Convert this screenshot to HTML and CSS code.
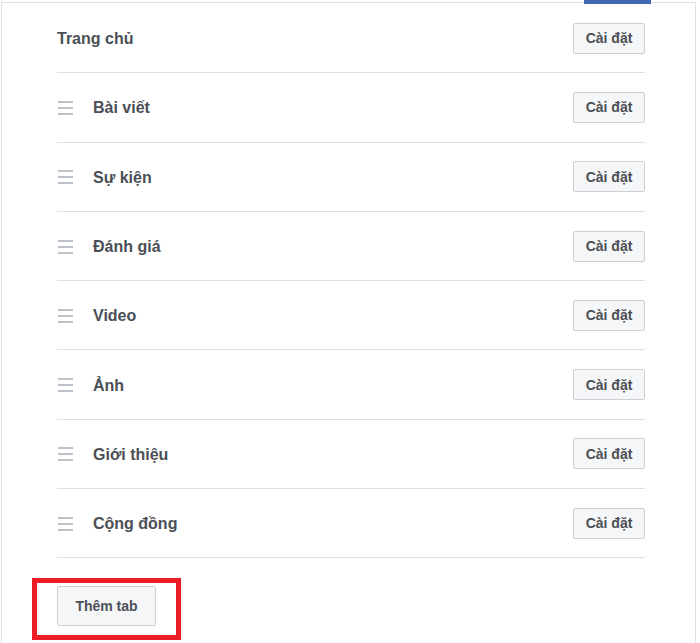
FILE: index.html
```html
<!DOCTYPE html>
<html lang="vi">

<head>
    <meta charset="UTF-8">
    <title>Tab trang</title>
    <link rel="stylesheet" href="styles.css">
</head>

<body>

    <div class="panel">
        <span class="tab-marker"></span>

        <div class="tab-list">
            <div class="tab-row">
                <span class="tab-name">Trang chủ</span>
                <button class="btn-small">Cài đặt</button>
            </div>
            <div class="tab-row">
                <span class="drag"><i></i><i></i><i></i></span>
                <span class="tab-name">Bài viết</span>
                <button class="btn-small">Cài đặt</button>
            </div>
            <div class="tab-row">
                <span class="drag"><i></i><i></i><i></i></span>
                <span class="tab-name">Sự kiện</span>
                <button class="btn-small">Cài đặt</button>
            </div>
            <div class="tab-row">
                <span class="drag"><i></i><i></i><i></i></span>
                <span class="tab-name">Đánh giá</span>
                <button class="btn-small">Cài đặt</button>
            </div>
            <div class="tab-row">
                <span class="drag"><i></i><i></i><i></i></span>
                <span class="tab-name">Video</span>
                <button class="btn-small">Cài đặt</button>
            </div>
            <div class="tab-row">
                <span class="drag"><i></i><i></i><i></i></span>
                <span class="tab-name">Ảnh</span>
                <button class="btn-small">Cài đặt</button>
            </div>
            <div class="tab-row">
                <span class="drag"><i></i><i></i><i></i></span>
                <span class="tab-name">Giới thiệu</span>
                <button class="btn-small">Cài đặt</button>
            </div>
            <div class="tab-row">
                <span class="drag"><i></i><i></i><i></i></span>
                <span class="tab-name">Cộng đồng</span>
                <button class="btn-small">Cài đặt</button>
            </div>
        </div>

        <div class="add-tab">
            <button class="btn-add">Thêm tab</button>
        </div>
    </div>

</body>

</html>
```

FILE: styles.css
```css
html,
body {
    margin: 0;
    padding: 0;
    background: white;
    font-family: 'Liberation Sans', Arial, sans-serif;
    color: #4b4f56;
    height: 100%;
    overflow: hidden;
}

.panel {
    position: relative;
    margin: 2px 4px 0 1px;
    border: 1px solid #dddfe2;
    border-bottom: none;
    height: 641px;
    box-sizing: border-box;
    padding: 0 50px 0 55px;
}

.tab-marker {
    position: absolute;
    top: -3px;
    left: 582px;
    width: 67px;
    height: 4px;
    background: #4267b2;
}

.tab-list {
    padding-top: 1px;
}

.tab-row {
    display: flex;
    align-items: center;
    height: 68.3px;
    border-bottom: 1px solid #dddfe2;
}

.tab-name {
    flex: 1;
    font-size: 16px;
    font-weight: bold;
    padding-top: 2px;
}

.drag {
    display: flex;
    flex-direction: column;
    gap: 4px;
    width: 15px;
    margin: 1px 20px 0 1px;
}

.drag i {
    display: block;
    height: 2px;
    background: #bec2c9;
}

.btn-small,
.btn-add {
    font-family: inherit;
    font-weight: bold;
    font-size: 14px;
    color: #4b4f56;
    background: #f5f6f7;
    border: 1px solid #ccd0d5;
    border-radius: 2px;
    box-sizing: border-box;
}

.btn-small {
    width: 72px;
    height: 31px;
    padding: 0;
}

.add-tab {
    position: relative;
    padding-top: 28px;
}

.btn-add {
    width: 99px;
    height: 40px;
    padding: 0;
}

/* red highlight around the button */
.add-tab::after {
    content: "";
    position: absolute;
    top: 20px;
    left: -25px;
    width: 149px;
    height: 62px;
    border: 5.5px solid #ed1c24;
    box-sizing: border-box;
}
```
